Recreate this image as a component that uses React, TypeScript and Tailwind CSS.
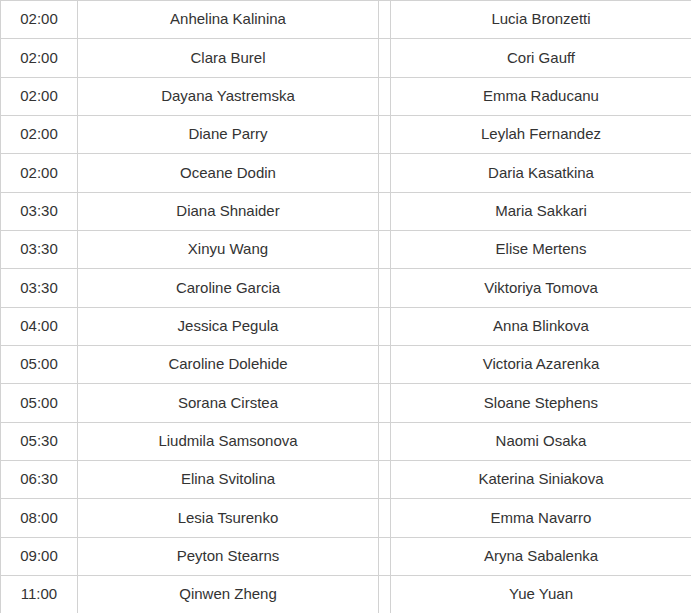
import React from "react";

const rows: [string, string, string][] = [
  ["02:00", "Anhelina Kalinina", "Lucia Bronzetti"],
  ["02:00", "Clara Burel", "Cori Gauff"],
  ["02:00", "Dayana Yastremska", "Emma Raducanu"],
  ["02:00", "Diane Parry", "Leylah Fernandez"],
  ["02:00", "Oceane Dodin", "Daria Kasatkina"],
  ["03:30", "Diana Shnaider", "Maria Sakkari"],
  ["03:30", "Xinyu Wang", "Elise Mertens"],
  ["03:30", "Caroline Garcia", "Viktoriya Tomova"],
  ["04:00", "Jessica Pegula", "Anna Blinkova"],
  ["05:00", "Caroline Dolehide", "Victoria Azarenka"],
  ["05:00", "Sorana Cirstea", "Sloane Stephens"],
  ["05:30", "Liudmila Samsonova", "Naomi Osaka"],
  ["06:30", "Elina Svitolina", "Katerina Siniakova"],
  ["08:00", "Lesia Tsurenko", "Emma Navarro"],
  ["09:00", "Peyton Stearns", "Aryna Sabalenka"],
  ["11:00", "Qinwen Zheng", "Yue Yuan"],
];

export default function App() {
  return (
    <div className="w-[691px] h-[614px] overflow-hidden bg-white">
      <div
        className="w-[692px] text-[15px] text-[#333333]"
        style={{ fontFamily: '"Liberation Sans", Arial, sans-serif' }}
      >
        {rows.map((r, i) => (
          <div
            key={i}
            className="flex h-[38.33px] border-t border-b-0 border-[#d2d2d2] box-border"
          >
            <div className="w-[77px] shrink-0 border-l border-[#d2d2d2] flex items-center justify-center">
              {r[0]}
            </div>
            <div className="w-[301px] shrink-0 border-l border-[#d2d2d2] flex items-center justify-center">
              {r[1]}
            </div>
            <div className="w-[12px] shrink-0 border-l border-[#d2d2d2]" />
            <div className="w-[302px] shrink-0 border-l border-r border-[#d2d2d2] flex items-center justify-center">
              {r[2]}
            </div>
          </div>
        ))}
      </div>
    </div>
  );
}
